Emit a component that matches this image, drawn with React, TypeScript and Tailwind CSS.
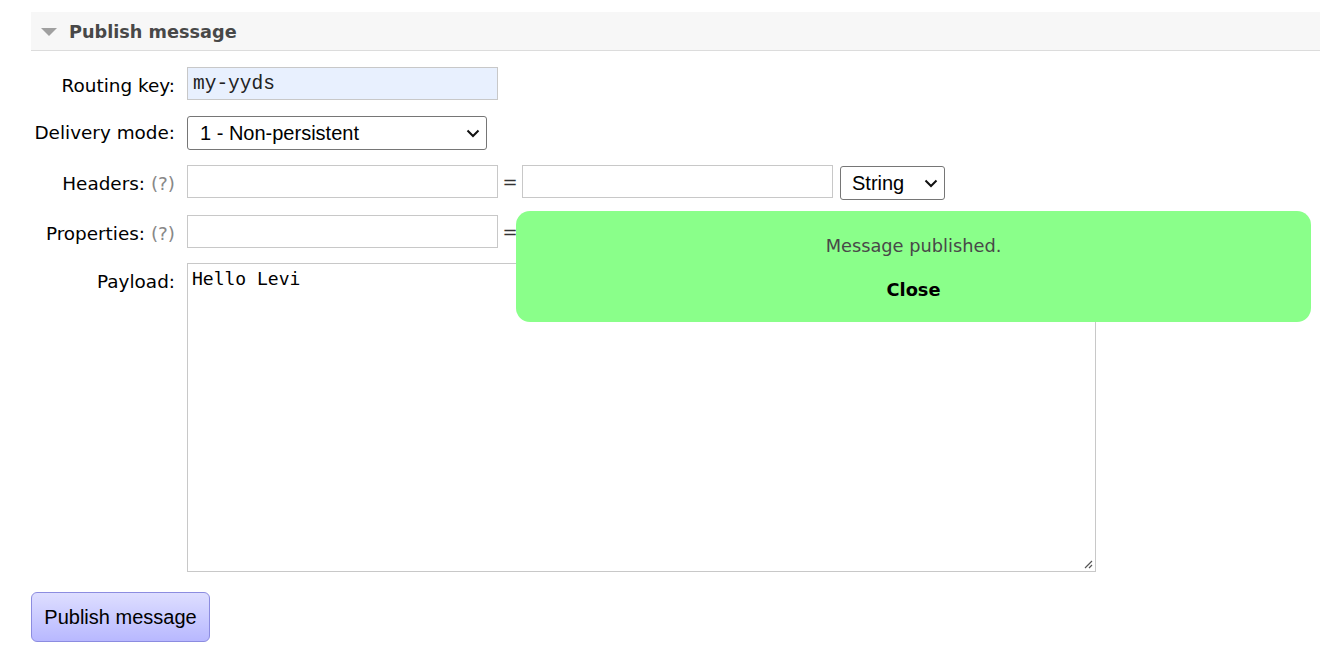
import React from "react";

const labelCls = "w-[156px] shrink-0 text-right pr-3 text-[18.4px] text-black";
const inputCls = "h-[33px] w-[311px] shrink-0 border border-[#c8c8c8] bg-white";
const arial = { fontFamily: '"Liberation Sans", Arial, sans-serif' };

function Chevron() {
  return (
    <svg width="14" height="9" viewBox="0 0 14 9">
      <path d="M1.5 1.5 L7 7 L12.5 1.5" fill="none" stroke="#111" strokeWidth="2" />
    </svg>
  );
}

export default function App() {
  return (
    <div className="relative w-[1320px] h-[653px] bg-white overflow-hidden" style={{ fontFamily: '"DejaVu Sans", Verdana, sans-serif' }}>
      <div className="pl-[31px] pt-[12px]">
        <div className="h-[39px] bg-[#f7f7f7] border-b border-[#dcdcdc] flex items-center pt-[3px]">
          <svg width="16" height="9" viewBox="0 0 16 9" className="ml-[10px] mr-[12px]">
            <path d="M0 0 L16 0 L8 8 Z" fill="#a0a0a0" />
          </svg>
          <span className="font-bold text-[17.7px] text-[#484848]">Publish message</span>
        </div>

        <div className="flex flex-col">
          <div className="mt-[16px] h-[33px] flex items-center">
            <div className={`${labelCls} pt-[5px]`}>Routing key:</div>
            <div className="h-[33px] w-[311px] border border-[#c8c8c8] bg-[#e8f0fe] flex items-center pl-[5px] pt-[2px] text-[19.5px] text-[#222]" style={{ fontFamily: '"Liberation Mono", monospace' }}>
              my-yyds
            </div>
          </div>

          <div className="mt-[16px] h-[34px] flex items-center">
            <div className={labelCls}>Delivery mode:</div>
            <div className="h-[34px] w-[300px] border border-[#767676] rounded-[3px] bg-white flex items-center justify-between pl-[12px] pr-[6px] text-[20px]" style={arial}>
              <span>1 - Non-persistent</span>
              <Chevron />
            </div>
          </div>

          <div className="mt-[15px] h-[35px] flex items-start">
            <div className={`${labelCls} pt-[5px]`}>
              Headers: <span className="text-[#888]">(?)</span>
            </div>
            <div className={inputCls} />
            <div className="w-[24px] shrink-0 text-center text-[18px] text-[#333] pt-[3px]">=</div>
            <div className={inputCls} />
            <div className="ml-[7px] mt-[1px] h-[34px] w-[105px] border border-[#767676] rounded-[3px] bg-white flex items-center justify-between pl-[11px] pr-[6px] text-[20px]" style={arial}>
              <span>String</span>
              <Chevron />
            </div>
          </div>

          <div className="mt-[15px] h-[33px] flex items-start">
            <div className={`${labelCls} pt-[5px]`}>
              Properties: <span className="text-[#888]">(?)</span>
            </div>
            <div className={inputCls} />
            <div className="w-[24px] shrink-0 text-center text-[18px] text-[#333] pt-[3px]">=</div>
            <div className={inputCls} />
          </div>

          <div className="mt-[15px] flex items-start">
            <div className={`${labelCls} pt-[5px]`}>Payload:</div>
            <div className="relative h-[309px] w-[909px] border border-[#c8c8c8] bg-white pl-[4px] pt-[3px] text-[18px] leading-[24px] text-black" style={{ fontFamily: '"DejaVu Sans Mono", monospace' }}>
              Hello Levi
              <svg width="10" height="10" viewBox="0 0 10 10" className="absolute right-[2px] bottom-[2px]">
                <path d="M9 2 L2 9 M9 6 L6 9" stroke="#555" strokeWidth="1.2" />
              </svg>
            </div>
          </div>
        </div>

        <button className="mt-[20px] h-[50px] w-[179px] rounded-[6px] border border-[#8c8ce0] bg-gradient-to-b from-[#dedeff] to-[#b8b8ff] text-[20px] text-black" style={arial}>
          Publish message
        </button>
      </div>

      <div className="absolute left-[516px] top-[211px] w-[795px] h-[111px] rounded-[14px] bg-[#8aff8a] flex flex-col items-center pt-[23px]">
        <div className="text-[17.8px] leading-[24px] text-[#484848]">Message published.</div>
        <div className="mt-[20px] text-[17.8px] leading-[24px] font-bold text-black">Close</div>
      </div>
    </div>
  );
}
